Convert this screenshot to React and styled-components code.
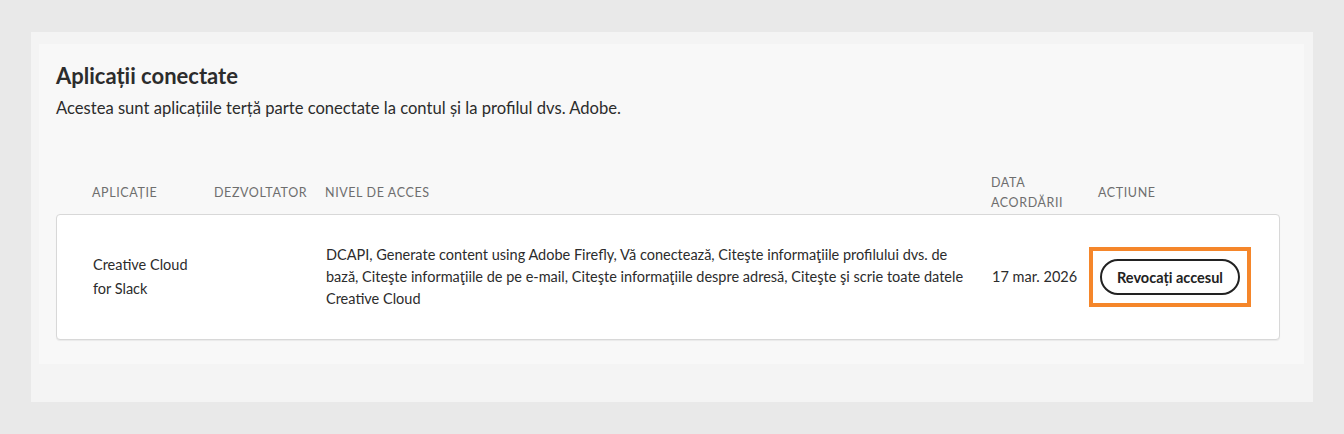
import React from "react";
import styled, { createGlobalStyle } from "styled-components";

const GlobalStyle = createGlobalStyle`
  html, body {
    margin: 0;
    padding: 0;
    background: #e9e9e9;
  }
  body {
    font-family: "Lato", "Noto Sans", sans-serif;
    color: #2c2c2c;
  }
`;

const Page = styled.div`
  padding: 32px 31px 32px 31px;
`;

const OuterPanel = styled.div`
  background: #f4f4f4;
  padding: 12px 9px 38px 8px;
`;

const Section = styled.section`
  background: #f8f8f8;
  padding: 18px 24px 24px 17px;
`;

const Title = styled.h2`
  margin: 0;
  font-size: 22px;
  line-height: 28px;
  font-weight: 700;
  color: #2c2c2c;
`;

const Subtitle = styled.p`
  margin: 6px 0 0;
  font-size: 16.6px;
  line-height: 24px;
  color: #2c2c2c;
`;

const columns = "122px 111px 666px 107px auto";

const HeaderRow = styled.div`
  display: grid;
  grid-template-columns: ${columns};
  align-items: center;
  margin-top: 53px;
  padding: 0 36px 1px;
`;

const HeaderCell = styled.div`
  font-size: 12.5px;
  line-height: 20px;
  letter-spacing: 0.6px;
  text-transform: uppercase;
  color: #6e6e6e;
  padding-right: ${(p) => (p.narrow ? "30px" : "8px")};
`;

const Card = styled.div`
  background: #fff;
  border: 1px solid #d8d8d8;
  border-radius: 4px;
  box-shadow: 0 1px 1px rgba(0, 0, 0, 0.06);
`;

const Row = styled.div`
  display: grid;
  grid-template-columns: ${columns};
  align-items: center;
  padding: 29px 36px 29px;
`;

const Cell = styled.div`
  font-size: 14.5px;
  line-height: ${(p) => (p.tall ? "24px" : "22px")};
  color: #2c2c2c;
  padding-right: ${(p) => p.pr || "8px"};
`;

const Highlight = styled.div`
  display: inline-flex;
  margin-left: -10px;
  padding: 8px 7px;
  border: 4px solid #f5862a;
`;

const RevokeButton = styled.button`
  font-family: "Lato", "Noto Sans", sans-serif;
  font-size: 14.5px;
  font-weight: 700;
  color: #222;
  background: #fff;
  border: 2px solid #222;
  border-radius: 18px;
  height: 36px;
  padding: 0 15px;
  white-space: nowrap;
  cursor: pointer;
`;

const apps = [
  {
    name: ["Creative Cloud", "for Slack"],
    developer: "",
    access:
      "DCAPI, Generate content using Adobe Firefly, Vă conectează, Citeşte informaţiile profilului dvs. de bază, Citeşte informaţiile de pe e-mail, Citeşte informaţiile despre adresă, Citeşte şi scrie toate datele Creative Cloud",
    date: "17 mar. 2026",
  },
];

export default function App() {
  return (
    <>
      <GlobalStyle />
      <Page>
        <OuterPanel>
          <Section>
            <Title>Aplicații conectate</Title>
            <Subtitle>
              Acestea sunt aplicațiile terță parte conectate la contul și la profilul dvs. Adobe.
            </Subtitle>
            <HeaderRow>
              <HeaderCell>Aplicație</HeaderCell>
              <HeaderCell>Dezvoltator</HeaderCell>
              <HeaderCell>Nivel de acces</HeaderCell>
              <HeaderCell narrow>Data acordării</HeaderCell>
              <HeaderCell>Acțiune</HeaderCell>
            </HeaderRow>
            <Card>
              {apps.map((app) => (
                <Row key={app.date}>
                  <Cell tall>
                    {app.name[0]}
                    <br />
                    {app.name[1]}
                  </Cell>
                  <Cell>{app.developer}</Cell>
                  <Cell pr="18px">{app.access}</Cell>
                  <Cell>{app.date}</Cell>
                  <div>
                    <Highlight>
                      <RevokeButton>Revocați accesul</RevokeButton>
                    </Highlight>
                  </div>
                </Row>
              ))}
            </Card>
          </Section>
        </OuterPanel>
      </Page>
    </>
  );
}
